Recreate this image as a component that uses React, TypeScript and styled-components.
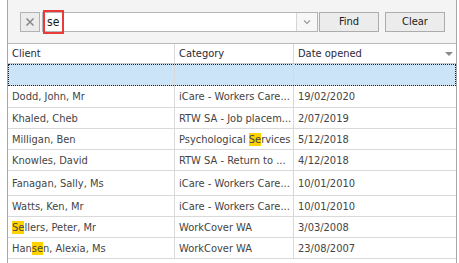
import React from "react";
import styled, { createGlobalStyle } from "styled-components";

const Global = createGlobalStyle`
  html, body { margin: 0; padding: 0; background: #ffffff; }
  body { font-family: "DejaVu Sans Condensed", "DejaVu Sans", sans-serif; font-stretch: condensed; font-size: 11px; }
`;

const Panel = styled.div`
  margin-left: 7px;
  width: 450px;
  height: 263px;
  box-sizing: border-box;
  border-left: 1px solid #a7a7a7;
  border-right: 1px solid #a7a7a7;
  display: flex;
  flex-direction: column;
  background: #ffffff;
`;

const Toolbar = styled.div`
  height: 44px;
  box-sizing: border-box;
  background: #f4f4f4;
  border-bottom: 1px solid #b9b9b9;
  padding: 12px 0 0 12px;
  display: flex;
  align-items: flex-start;
`;

const ClearX = styled.button`
  width: 20px;
  height: 20px;
  box-sizing: border-box;
  margin: 0 2px 0 0;
  padding: 0;
  border: 1px solid #b2b2b2;
  background: #ececec;
  display: flex;
  align-items: center;
  justify-content: center;
`;

const Combo = styled.div`
  position: relative;
  width: 276px;
  height: 20px;
  box-sizing: border-box;
  border: 1px solid #b4b4b4;
  background: #ffffff;
  display: flex;
  margin-right: 1px;
`;

const SearchText = styled.div`
  flex: 1;
  padding-left: 4px;
  line-height: 18px;
  color: #1a1a1a;
  font-size: 12px;
`;

const DropButton = styled.div`
  width: 20px;
  border-left: 1px solid #d4d4d4;
  background: #f7f7f7;
  display: flex;
  align-items: center;
  justify-content: center;
`;

const Annotation = styled.div`
  position: absolute;
  left: 0px;
  top: -3px;
  width: 21px;
  height: 24px;
  box-sizing: border-box;
  border: 2px solid #ea3a3a;
  pointer-events: none;
`;

const ToolButton = styled.button<{ $gap?: number }>`
  width: 60px;
  height: 20px;
  box-sizing: border-box;
  margin: 0 ${(p) => p.$gap ?? 0}px 0 0;
  padding: 0;
  border: 1px solid #acacac;
  background: #ececec;
  color: #222;
  font-family: inherit;
  font-stretch: condensed;
  font-size: 11px;
  line-height: 18px;
`;

const Grid = styled.div`
  display: flex;
  flex-direction: column;
`;

const Row = styled.div<{ $h: number; $selected?: boolean; $header?: boolean }>`
  height: ${(p) => p.$h}px;
  box-sizing: border-box;
  display: grid;
  grid-template-columns: 167px 119px 1fr;
  border-bottom: 1px solid ${(p) => (p.$header ? "#c9c9c9" : "#d9d9d9")};
  background: ${(p) => (p.$selected ? "#cce4f7" : "#ffffff")};
  outline: ${(p) => (p.$selected ? "1px dotted #222" : "none")};
  outline-offset: -1px;
  color: ${(p) => (p.$header ? "#28283a" : "#444444")};
`;

const Cell = styled.div<{ $last?: boolean }>`
  position: relative;
  display: flex;
  align-items: center;
  padding-left: 4px;
  overflow: hidden;
  border-right: ${(p) => (p.$last ? "none" : "1px solid #d9d9d9")};
`;

const CellText = styled.span`
  white-space: pre;
  overflow: hidden;
`;

const Hl = styled.span`
  background: #ffd200;
`;

const SortArrow = styled.div`
  position: absolute;
  right: 3px;
  top: 8px;
  width: 0;
  height: 0;
  border-left: 4px solid transparent;
  border-right: 4px solid transparent;
  border-top: 4px solid #8a8a8a;
`;

type Seg = string | { hl: string };
type Item = { client: Seg[]; category: Seg[]; date: string; h: number };

const rows: Item[] = [
  { client: ["Dodd, John, Mr"], category: ["iCare - Workers Care..."], date: "19/02/2020", h: 22 },
  { client: ["Khaled, Cheb"], category: ["RTW SA - Job placem..."], date: "2/07/2019", h: 21 },
  { client: ["Milligan, Ben"], category: ["Psychological ", { hl: "Se" }, "rvices"], date: "5/12/2018", h: 21 },
  { client: ["Knowles, David"], category: ["RTW SA - Return to ..."], date: "4/12/2018", h: 21 },
  { client: ["Fanagan, Sally, Ms"], category: ["iCare - Workers Care..."], date: "10/01/2010", h: 25 },
  { client: ["Watts, Ken, Mr"], category: ["iCare - Workers Care..."], date: "10/01/2010", h: 21 },
  { client: [{ hl: "Se" }, "llers, Peter, Mr"], category: ["WorkCover WA"], date: "3/03/2008", h: 21 },
  { client: ["Han", { hl: "se" }, "n, Alexia, Ms"], category: ["WorkCover WA"], date: "23/08/2007", h: 21 },
];

const renderSegs = (segs: Seg[]) => (
  <CellText>
    {segs.map((s, i) =>
      typeof s === "string" ? <React.Fragment key={i}>{s}</React.Fragment> : <Hl key={i}>{s.hl}</Hl>
    )}
  </CellText>
);

export default function App() {
  return (
    <>
      <Global />
      <Panel>
        <Toolbar>
          <ClearX aria-label="clear">
            <svg width="10" height="10" viewBox="0 0 10 10">
              <path d="M1.5 1.5 L8.5 8.5 M8.5 1.5 L1.5 8.5" stroke="#8a8a8a" strokeWidth="1.6" />
            </svg>
          </ClearX>
          <Combo>
            <SearchText>se</SearchText>
            <DropButton>
              <svg width="8" height="6" viewBox="0 0 8 6">
                <path d="M1 1.5 L4 4.5 L7 1.5" stroke="#9a9a9a" strokeWidth="1.2" fill="none" />
              </svg>
            </DropButton>
            <Annotation />
          </Combo>
          <ToolButton $gap={6}>Find</ToolButton>
          <ToolButton>Clear</ToolButton>
        </Toolbar>
        <Grid>
          <Row $h={20} $header>
            <Cell>
              <CellText>Client</CellText>
            </Cell>
            <Cell>
              <CellText>Category</CellText>
            </Cell>
            <Cell $last>
              <CellText>Date opened</CellText>
              <SortArrow />
            </Cell>
          </Row>
          <Row $h={22} $selected>
            <Cell />
            <Cell />
            <Cell $last />
          </Row>
          {rows.map((r, i) => (
            <Row key={i} $h={r.h}>
              <Cell>{renderSegs(r.client)}</Cell>
              <Cell>{renderSegs(r.category)}</Cell>
              <Cell $last>
                <CellText>{r.date}</CellText>
              </Cell>
            </Row>
          ))}
        </Grid>
      </Panel>
    </>
  );
}
